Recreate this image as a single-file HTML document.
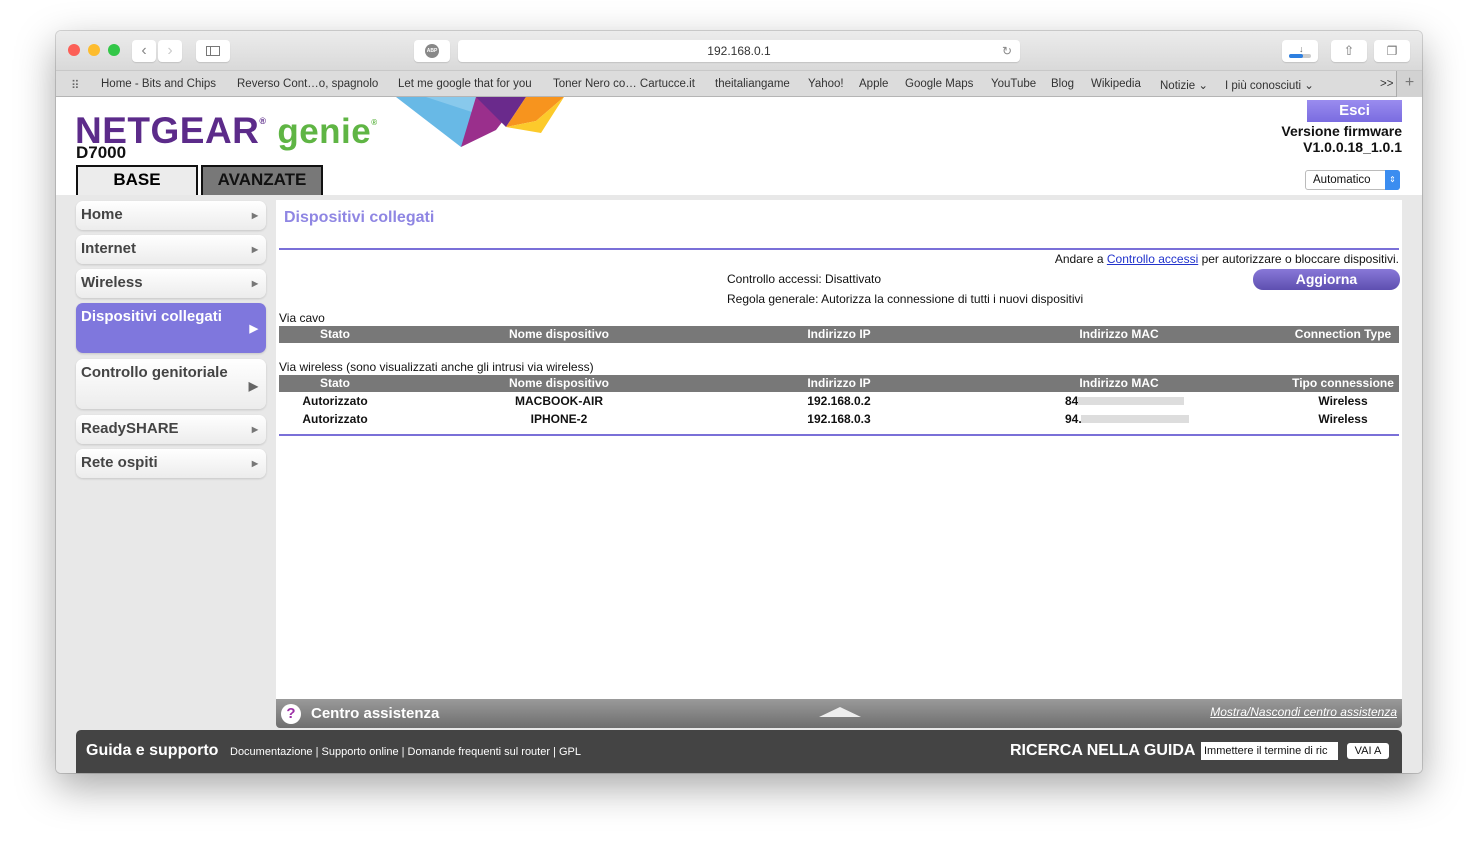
<!DOCTYPE html>
<html><head><meta charset="utf-8"><style>
*{margin:0;padding:0;box-sizing:border-box}
body{width:1478px;height:853px;background:#fff;font-family:"Liberation Sans",Arial,sans-serif;position:relative;overflow:hidden}
.win{position:absolute;left:56px;top:31px;width:1366px;height:742px;border-radius:5px;overflow:hidden;box-shadow:0 14px 40px rgba(0,0,0,.35),0 0 0 1px rgba(0,0,0,.15)}
.tb{position:absolute;left:0;top:0;width:1366px;height:39px;background:linear-gradient(#ececec,#d9d9d9)}
.bm{position:absolute;left:0;top:39px;width:1366px;height:27px;background:#dcdcdc;border-top:1px solid #c8c8c8;border-bottom:1px solid #b5b5b5;font-size:11.5px;color:#333}
.bm span{position:absolute;top:7px}
.dot{position:absolute;top:13px;width:12px;height:12px;border-radius:50%}
.btn{position:absolute;background:#fff;border-radius:4px;box-shadow:0 1px 1px rgba(0,0,0,.12)}
.page{position:absolute;left:0;top:66px;width:1366px;height:676px;background:#e8e8e8}
.hdr{position:absolute;left:0;top:0;width:1366px;height:98px;background:#fff}
.nav{position:absolute;left:20px;width:190px;background:linear-gradient(#fff,#ececec);border-radius:7px;box-shadow:0 1px 2px rgba(0,0,0,.15);font-weight:bold;font-size:15px;color:#444;padding:5px 5px}
.nav i{position:absolute;right:8px;top:10px;font-style:normal;font-size:8px;color:#777}
.content{position:absolute;left:220px;top:103px;width:1126px;height:500px;background:#fff}
.th{position:absolute;left:3px;width:1120px;height:17px;background:#787878;color:#fff;font-weight:bold;font-size:12px}
.th span,.row span{position:absolute;top:1px;transform:translateX(-50%);white-space:nowrap}
.row{position:absolute;left:3px;width:1120px;height:17px;font-weight:bold;font-size:12px;color:#111}
.t{position:absolute;font-size:12px;color:#111;white-space:nowrap}
</style></head><body>
<div class="win">
<div class="tb">
<div class="dot" style="left:12px;background:#fc5f57"></div>
<div class="dot" style="left:32px;background:#fdbc2e"></div>
<div class="dot" style="left:52px;background:#33c748"></div>
<div class="btn" style="left:76px;top:9px;width:24px;height:22px;color:#888;font-size:16px;text-align:center;line-height:21px">‹</div>
<div class="btn" style="left:102px;top:9px;width:24px;height:22px;color:#ccc;font-size:16px;text-align:center;line-height:21px">›</div>
<div class="btn" style="left:140px;top:9px;width:34px;height:22px"><div style="position:absolute;left:10px;top:6px;width:14px;height:10px;border:1px solid #777"></div><div style="position:absolute;left:14px;top:6px;width:1px;height:10px;background:#777"></div></div>
<div class="btn" style="left:358px;top:9px;width:36px;height:22px"><div style="position:absolute;left:11px;top:4px;width:14px;height:14px;border-radius:50%;background:#888;color:#fff;font-size:5px;font-weight:bold;text-align:center;line-height:14px">ABP</div></div>
<div class="btn" style="left:402px;top:9px;width:562px;height:22px;font-size:12px;color:#333;text-align:center;line-height:22px">192.168.0.1<span style="position:absolute;right:8px;color:#888">↻</span></div>
<div class="btn" style="left:1226px;top:9px;width:36px;height:22px"><div style="position:absolute;left:7px;top:14px;width:22px;height:4px;border-radius:2px;background:#ccc"></div><div style="position:absolute;left:7px;top:14px;width:14px;height:4px;border-radius:2px;background:#2d7fe0"></div><div style="position:absolute;left:17px;top:4px;font-size:9px;color:#666">↓</div></div>
<div class="btn" style="left:1275px;top:9px;width:36px;height:22px;text-align:center;color:#777;font-size:13px;line-height:22px">⇧</div>
<div class="btn" style="left:1318px;top:9px;width:36px;height:22px;text-align:center;color:#777;font-size:12px;line-height:22px">❐</div>
</div>
<div class="bm">
<span style="left:15px;letter-spacing:1px;color:#666">⠿</span>
<span style="left:45px">Home - Bits and Chips</span><span style="left:181px">Reverso Cont…o, spagnolo</span><span style="left:342px">Let me google that for you</span><span style="left:497px">Toner Nero co… Cartucce.it</span><span style="left:659px">theitaliangame</span><span style="left:752px">Yahoo!</span><span style="left:803px">Apple</span><span style="left:849px">Google Maps</span><span style="left:935px">YouTube</span><span style="left:995px">Blog</span><span style="left:1035px">Wikipedia</span><span style="left:1104px">Notizie ⌄</span><span style="left:1169px">I più conosciuti ⌄</span><span style="left:1324px">&gt;&gt;</span><span style="left:1340px;top:0;width:26px;height:26px;border-left:1px solid #aaa;background:#d2d2d2;text-align:center;font-size:16px;line-height:24px;color:#777">+</span>
</div>
<div class="page">
<div class="hdr">
<svg style="position:absolute;left:340px;top:0" width="180" height="52"><polygon points="0,0 120,0 95,20 65,50" fill="#68b9e6"/><polygon points="30,0 120,0 85,18" fill="#9fd3f0" opacity=".6"/><polygon points="65,50 80,0 110,20 100,33" fill="#9a2f8c"/><polygon points="80,0 130,0 110,30" fill="#6a2a8c"/><polygon points="110,30 130,0 168,0 140,24" fill="#f7941e"/><polygon points="110,30 140,24 168,0 145,36" fill="#fcca2b"/></svg>
<div style="position:absolute;left:19px;top:13px;font-size:37px;font-weight:bold;color:#5c2b8a;letter-spacing:.5px">NETGEAR<sup style="font-size:9px;vertical-align:top;position:relative;top:6px">®</sup> <span style="color:#5fb544;font-size:35px">genie</span><sup style="font-size:8px;color:#5fb544;vertical-align:top;position:relative;top:8px">®</sup></div>
<div style="position:absolute;left:20px;top:46px;font-size:17px;font-weight:bold;color:#111">D7000</div>
<div style="position:absolute;left:20px;top:68px;width:122px;height:30px;background:#ececec;border:2px solid #111;border-bottom:none;text-align:center;font-weight:bold;font-size:17px;line-height:26px">BASE</div>
<div style="position:absolute;left:145px;top:68px;width:122px;height:30px;background:#787878;border:2px solid #111;border-bottom:none;text-align:center;font-weight:bold;font-size:17px;line-height:26px;color:#111">AVANZATE</div>
<div style="position:absolute;left:1251px;top:3px;width:95px;height:22px;background:linear-gradient(#9a8cef,#7a6ce0);color:#fff;font-weight:bold;font-size:15px;text-align:center;line-height:22px">Esci</div>
<div style="position:absolute;right:20px;top:26px;text-align:right;font-weight:bold;font-size:14px;line-height:16px;color:#111">Versione firmware<br>V1.0.0.18_1.0.1</div>
<div style="position:absolute;left:1249px;top:73px;width:95px;height:20px;border:1px solid #bbb;border-radius:3px;background:#fff;font-size:11.5px;line-height:18px;padding-left:7px;color:#111">Automatico<span style="position:absolute;right:-1px;top:-1px;width:15px;height:20px;background:#3b8df0;border-radius:0 3px 3px 0;color:#fff;font-size:8px;text-align:center;line-height:20px">⇕</span></div>
</div>
<div class="nav" style="top:104px;height:29px">Home<i>▶</i></div>
<div class="nav" style="top:138px;height:29px">Internet<i>▶</i></div>
<div class="nav" style="top:172px;height:29px">Wireless<i>▶</i></div>
<div class="nav" style="top:206px;height:50px;background:#7f77dd;color:#fff">Dispositivi collegati<i style="top:19px;font-size:11px;color:#fff">▶</i></div>
<div class="nav" style="top:262px;height:50px">Controllo genitoriale<i style="top:20px;font-size:12px;color:#666">▶</i></div>
<div class="nav" style="top:318px;height:29px">ReadySHARE<i>▶</i></div>
<div class="nav" style="top:352px;height:29px">Rete ospiti<i>▶</i></div>
<div class="content">
<div style="position:absolute;left:8px;top:9px;font-size:16px;font-weight:bold;color:#8f86e3">Dispositivi collegati</div>
<div style="position:absolute;left:3px;top:48px;width:1120px;height:2px;background:#7a70d8"></div>
<div class="t" style="right:3px;top:52px">Andare a <u style="color:#2233cc">Controllo accessi</u> per autorizzare o bloccare dispositivi.</div>
<div style="position:absolute;left:977px;top:69px;width:147px;height:21px;border-radius:10px;background:linear-gradient(#8878d8,#5e4fb0);color:#fff;font-weight:bold;font-size:14px;text-align:center;line-height:21px">Aggiorna</div>
<div class="t" style="left:451px;top:72px">Controllo accessi: Disattivato</div>
<div class="t" style="left:451px;top:92px">Regola generale: Autorizza la connessione di tutti i nuovi dispositivi</div>
<div class="t" style="left:3px;top:111px">Via cavo</div>
<div class="th" style="top:126px"><span style="left:56px">Stato</span><span style="left:280px">Nome dispositivo</span><span style="left:560px">Indirizzo IP</span><span style="left:840px">Indirizzo MAC</span><span style="left:1064px">Connection Type</span></div>
<div class="t" style="left:3px;top:160px">Via wireless (sono visualizzati anche gli intrusi via wireless)</div>
<div class="th" style="top:175px"><span style="left:56px">Stato</span><span style="left:280px">Nome dispositivo</span><span style="left:560px">Indirizzo IP</span><span style="left:840px">Indirizzo MAC</span><span style="left:1064px">Tipo connessione</span></div>
<div class="row" style="top:193px"><span style="left:786px;transform:none">84</span><span style="left:56px">Autorizzato</span><span style="left:280px">MACBOOK-AIR</span><span style="left:560px">192.168.0.2</span><span style="left:1064px">Wireless</span></div>
<div style="position:absolute;left:802px;top:197px;width:106px;height:8px;background:#ddd"></div>
<div class="row" style="top:211px"><span style="left:786px;transform:none">94.</span><span style="left:56px">Autorizzato</span><span style="left:280px">IPHONE-2</span><span style="left:560px">192.168.0.3</span><span style="left:1064px">Wireless</span></div>
<div style="position:absolute;left:805px;top:215px;width:108px;height:8px;background:#ddd"></div>
<div style="position:absolute;left:3px;top:234px;width:1120px;height:2px;background:#7a70d8"></div>
</div>
<div style="position:absolute;left:220px;top:602px;width:1126px;height:29px;background:linear-gradient(#9a9a9a,#6e6e6e);border-radius:0 0 4px 4px">
<div style="position:absolute;left:5px;top:5px;width:20px;height:20px;border-radius:50%;background:#fff;color:#9c2fa6;font-weight:bold;font-size:15px;text-align:center;line-height:20px">?</div>
<div style="position:absolute;left:35px;top:6px;color:#fff;font-weight:bold;font-size:15px">Centro assistenza</div>
<div style="position:absolute;left:543px;top:8px;width:0;height:0;border-left:21px solid transparent;border-right:21px solid transparent;border-bottom:10px solid #eee"></div>
<div style="position:absolute;right:5px;top:6px;color:#fff;font-style:italic;text-decoration:underline;font-size:12px">Mostra/Nascondi centro assistenza</div>
</div>
<div style="position:absolute;left:20px;top:633px;width:1326px;height:43px;background:#444;border-radius:5px 5px 0 0;color:#fff">
<div style="position:absolute;left:10px;top:12px;font-weight:bold;font-size:16px">Guida e supporto</div>
<div style="position:absolute;left:154px;top:16px;font-size:11px">Documentazione | Supporto online | Domande frequenti sul router | GPL</div>
<div style="position:absolute;left:934px;top:12px;font-weight:bold;font-size:16px">RICERCA NELLA GUIDA</div>
<div style="position:absolute;left:1125px;top:12px;width:137px;height:18px;background:#fff;color:#111;font-size:11px;line-height:18px;padding-left:3px;overflow:hidden;white-space:nowrap">Immettere il termine di ric</div>
<div style="position:absolute;left:1271px;top:13px;width:42px;height:16px;background:#fff;border-radius:3px;color:#111;font-size:11px;text-align:center;line-height:16px">VAI A</div>
</div>
</div>
</div>
</body></html>
